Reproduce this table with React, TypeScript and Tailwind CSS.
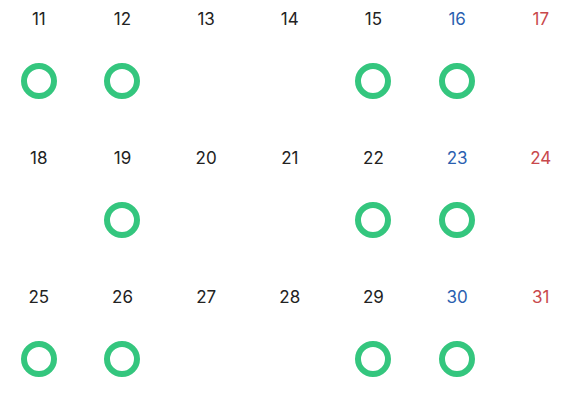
const weeks = [
  [11, 12, 13, 14, 15, 16, 17],
  [18, 19, 20, 21, 22, 23, 24],
  [25, 26, 27, 28, 29, 30, 31],
]

// days that have a completed ring
const done = new Set([11, 12, 15, 16, 19, 22, 23, 25, 26, 29, 30])

function Ring() {
  return <div className="w-9 h-9 rounded-full border-[6px] border-[#34c67e]" />
}

function DayCell({ day, col }: { day: number; col: number }) {
  const color = col === 5 ? 'text-[#2b5fb0]' : col === 6 ? 'text-[#c8484c]' : 'text-[#222222]'
  return (
    <div className="flex flex-col items-center h-[139px] pt-[7px]">
      <span className={`text-[17px] leading-6 ${color}`}>{day}</span>
      <div className="mt-8 h-9">{done.has(day) && <Ring />}</div>
    </div>
  )
}

export default function App() {
  return (
    <div className="w-[576px] h-[404px] bg-white overflow-hidden" style={{ fontFamily: 'Inter, "Noto Sans", sans-serif' }}>
      <div className="grid grid-cols-[repeat(7,83.67px)] -ml-[3px]">
        {weeks.map((week) =>
          week.map((day, i) => <DayCell key={day} day={day} col={i} />)
        )}
      </div>
    </div>
  )
}
